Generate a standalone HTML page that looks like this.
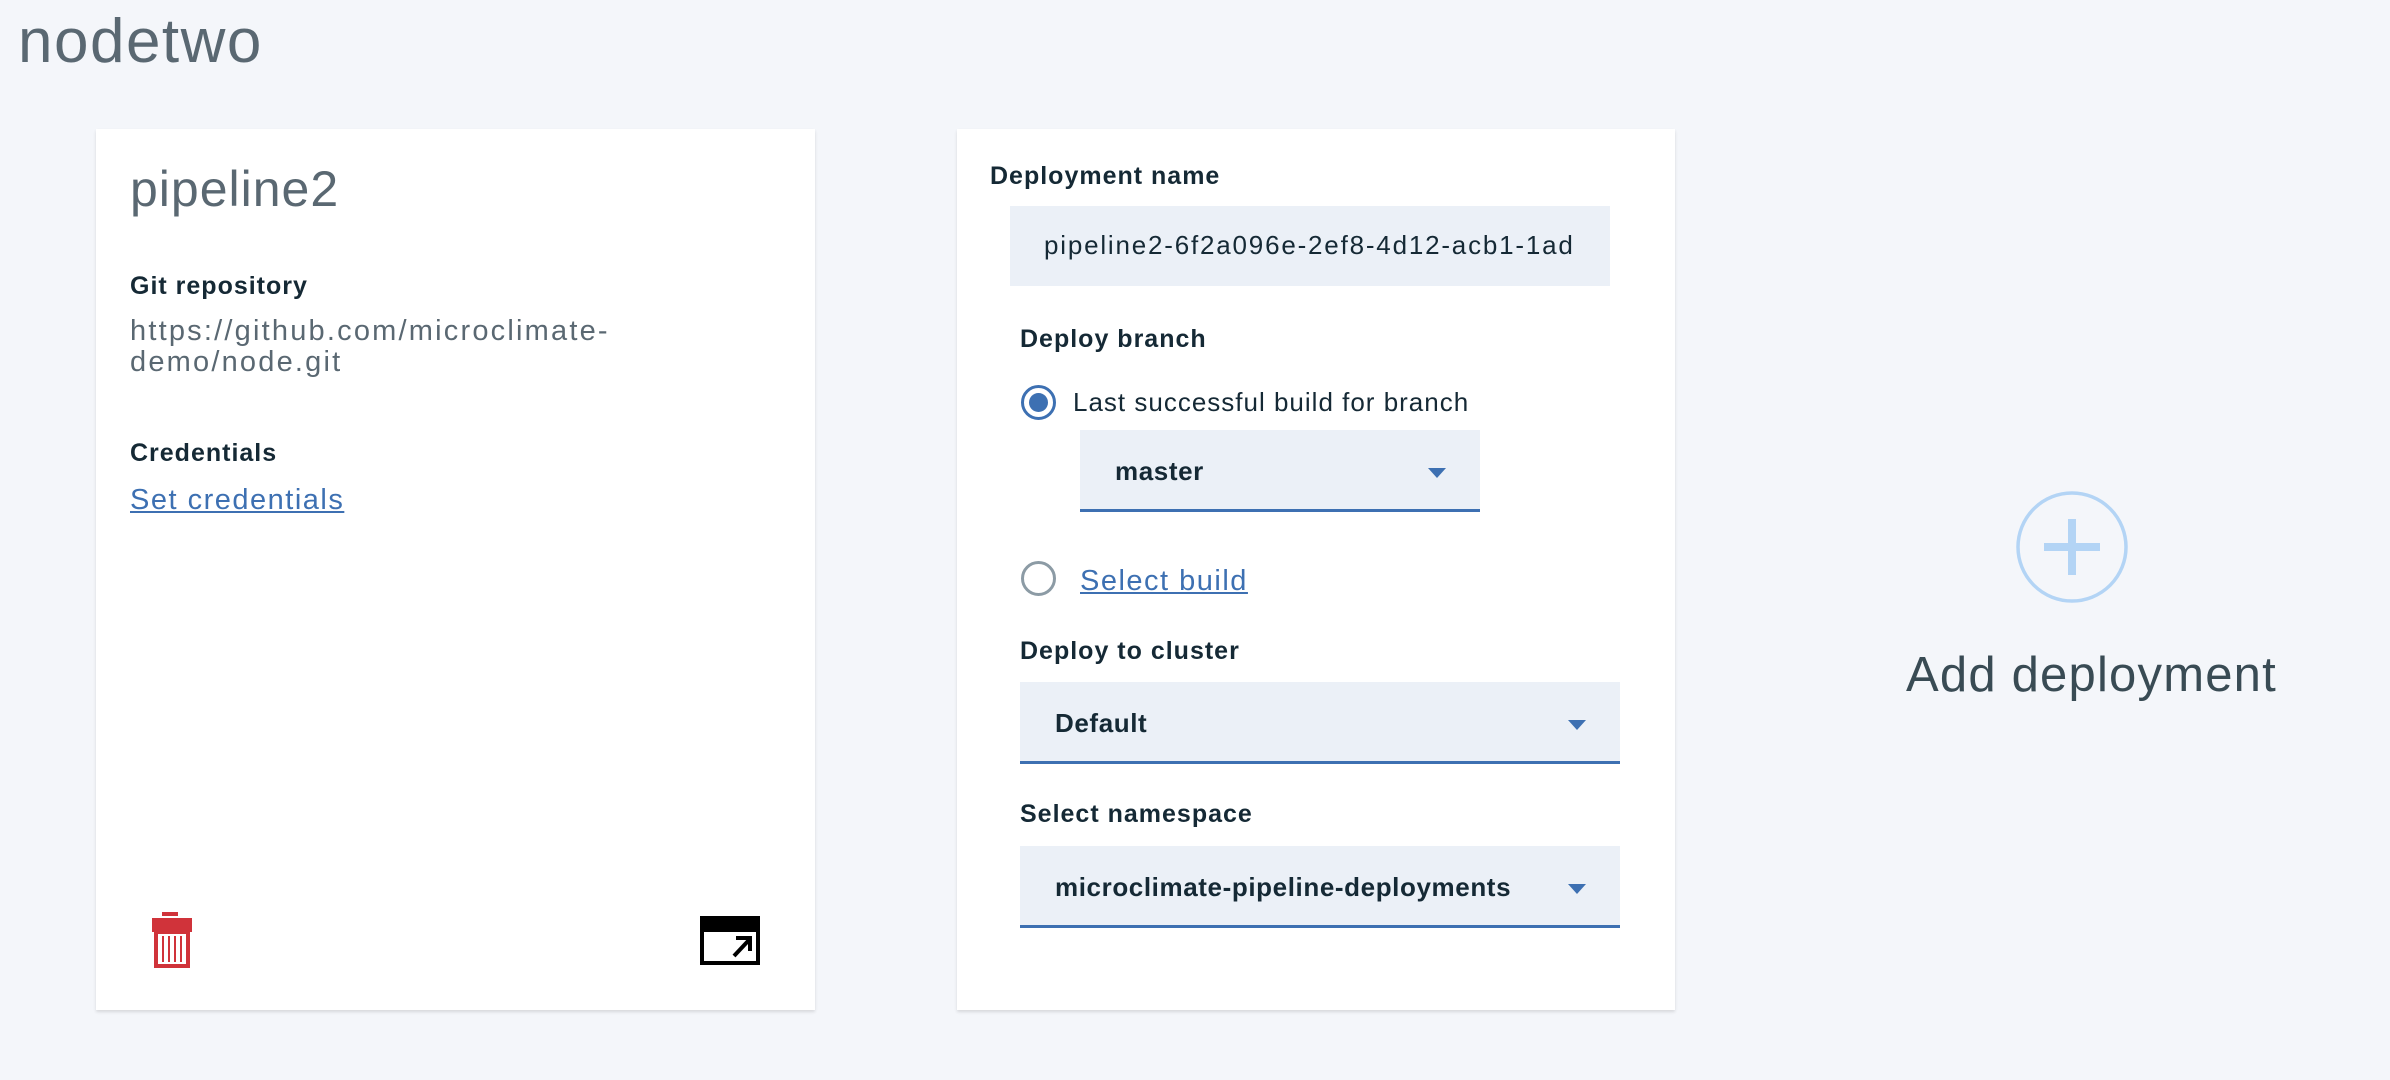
<!DOCTYPE html>
<html><head><meta charset="utf-8"><style>
html,body{margin:0;padding:0;width:2390px;height:1080px;background:#f4f6fa;overflow:hidden;font-family:"Liberation Sans",sans-serif;}
.a{position:absolute;white-space:nowrap;}
.card{position:absolute;background:#fff;box-shadow:0 2px 3px rgba(0,0,0,0.12);top:129px;height:881px;}
.lbl{font-weight:bold;font-size:25px;color:#152935;letter-spacing:1px;}
.dd{position:absolute;background:#ebf0f7;border-bottom:3px solid #3d70b2;box-sizing:border-box;}
.dd span{position:absolute;font-weight:bold;font-size:26px;color:#152935;letter-spacing:0.6px;}
.tri{position:absolute;width:0;height:0;border-left:9px solid transparent;border-right:9px solid transparent;border-top:10px solid #3d70b2;}
</style></head><body>
<div class="a" style="left:18px;top:6px;font-size:62px;color:#5a6872;font-weight:300;letter-spacing:1.5px">nodetwo</div>

<div class="card" style="left:96px;width:719px;"></div>
<div class="a" style="left:130px;top:160px;font-size:50px;color:#5a6872;letter-spacing:1px">pipeline2</div>
<div class="a lbl" style="left:130px;top:272px">Git repository</div>
<div class="a" style="left:130px;top:316px;font-size:29px;color:#5a6872;line-height:31px;letter-spacing:2.2px">https://github.com/microclimate-<br>demo/node.git</div>
<div class="a lbl" style="left:130px;top:439px">Credentials</div>
<div class="a" style="left:130px;top:484px;font-size:29px;color:#3d70b2;text-decoration:underline;letter-spacing:1.5px">Set credentials</div>
<svg class="a" style="left:150px;top:910px" width="44" height="60" viewBox="0 0 44 60">
<rect x="12" y="2" width="16" height="4" fill="#d0333a"/>
<rect x="2" y="8" width="40" height="14" fill="#d0333a"/>
<rect x="4" y="20" width="36" height="38" fill="#d0333a"/>
<rect x="8" y="24" width="28" height="30" fill="#fff"/>
<rect x="12" y="26" width="2" height="26" fill="#d0333a"/><rect x="18" y="26" width="2" height="26" fill="#d0333a"/><rect x="24" y="26" width="2" height="26" fill="#d0333a"/><rect x="30" y="26" width="2" height="26" fill="#d0333a"/>
</svg>
<svg class="a" style="left:700px;top:916px" width="60" height="49" viewBox="0 0 60 49">
<rect x="0" y="0" width="60" height="49" fill="#000"/>
<rect x="4" y="16" width="52" height="29" fill="#fff"/>
<path d="M34 40 L49 24" stroke="#000" stroke-width="4"/>
<path d="M36 20 H52 V35 H48 V24 H36 Z" fill="#000"/>
</svg>

<div class="card" style="left:957px;width:718px;"></div>
<div class="a lbl" style="left:990px;top:162px">Deployment name</div>
<div class="a" style="left:1010px;top:206px;width:600px;height:80px;background:#ebf0f7"></div>
<div class="a" style="left:1044px;top:230px;font-size:26px;color:#152935;letter-spacing:1.8px">pipeline2-6f2a096e-2ef8-4d12-acb1-1ad</div>
<div class="a lbl" style="left:1020px;top:325px">Deploy branch</div>
<div class="a" style="left:1021px;top:385px;width:29px;height:29px;border:3px solid #3d70b2;border-radius:50%;background:#fff"></div>
<div class="a" style="left:1029px;top:393px;width:19px;height:19px;border-radius:50%;background:#3d70b2"></div>
<div class="a" style="left:1073px;top:387px;font-size:26px;color:#152935;letter-spacing:1px">Last successful build for branch</div>
<div class="dd" style="left:1080px;top:430px;width:400px;height:82px"><span style="left:35px;top:26px">master</span><div class="tri" style="left:348px;top:38px"></div></div>
<div class="a" style="left:1021px;top:561px;width:29px;height:29px;border:3px solid #8c9ba5;border-radius:50%;background:#fff"></div>
<div class="a" style="left:1080px;top:565px;font-size:29px;color:#3d70b2;text-decoration:underline;letter-spacing:1.5px">Select build</div>
<div class="a lbl" style="left:1020px;top:637px">Deploy to cluster</div>
<div class="dd" style="left:1020px;top:682px;width:600px;height:82px"><span style="left:35px;top:26px">Default</span><div class="tri" style="left:548px;top:38px"></div></div>
<div class="a lbl" style="left:1020px;top:800px">Select namespace</div>
<div class="dd" style="left:1020px;top:846px;width:600px;height:82px"><span style="left:35px;top:26px">microclimate-pipeline-deployments</span><div class="tri" style="left:548px;top:38px"></div></div>

<svg class="a" style="left:2012px;top:487px" width="120" height="120" viewBox="0 0 120 120">
<circle cx="60" cy="60" r="54" fill="none" stroke="#b3d4f5" stroke-width="3.5"/>
<rect x="32" y="56" width="56" height="8" fill="#b3d4f5"/>
<rect x="56" y="32" width="8" height="56" fill="#b3d4f5"/>
</svg>
<div class="a" style="left:1906px;top:647px;font-size:49px;color:#394b54;letter-spacing:1.2px">Add deployment</div>
</body></html>
